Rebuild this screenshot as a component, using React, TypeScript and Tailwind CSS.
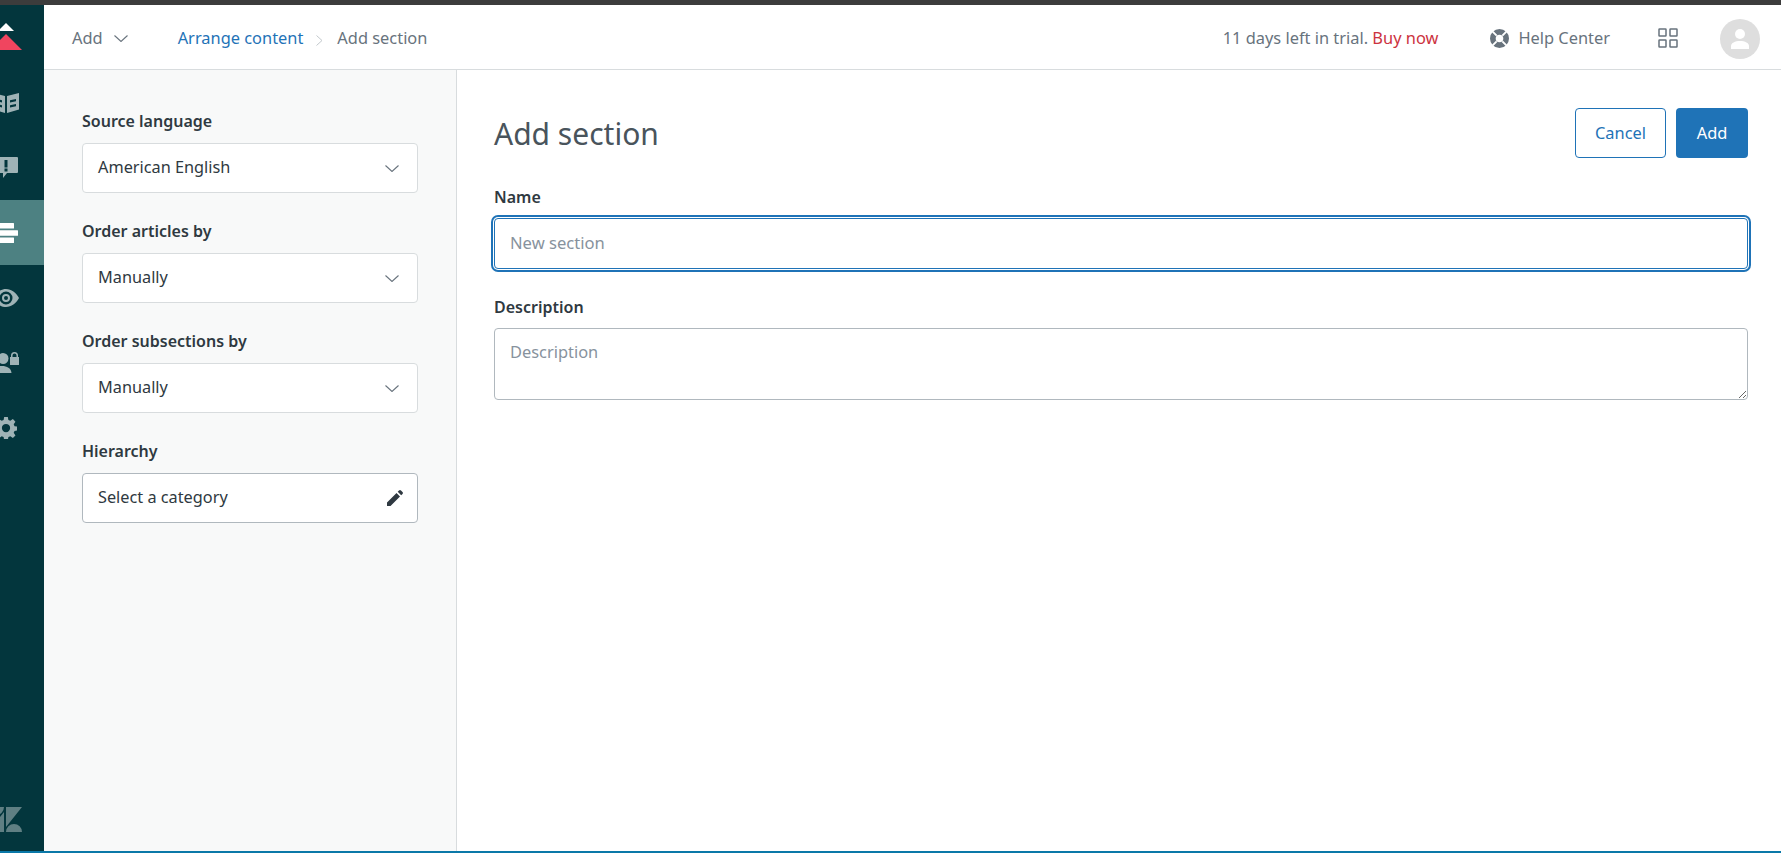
const navIcons = [
  // book
  <svg key="book" viewBox="0 0 26 20" className="w-[26px] h-[20px]" fill="#9fb3b6">
    <path d="M0 0l12 3v17l-12 -3.500zM3 6v2.200l6 1.300v-2.200zM3 11v2.200l6 1.300v-2.200zM14 3l12 -3v16.500l-12 3.500zM17 7.300v2.200l6 -1.300v-2.200zM17 12.300v2.200l6 -1.300v-2.200z" fillRule="evenodd" />
  </svg>,
  // alert bubble
  <svg key="alert" viewBox="0 0 24 21" className="w-[24px] h-[21px]" fill="#9fb3b6">
    <path d="M1 0h22a1 1 0 0 1 1 1v14a1 1 0 0 1 -1 1h-10l-4 5v-5h-8a1 1 0 0 1 -1 -1v-14a1 1 0 0 1 1 -1zM10.500 3v7.500h3v-7.500zM10.500 11.500v3h3v-3z" fillRule="evenodd" />
  </svg>,
  // arrange bars
  <svg key="bars" viewBox="0 0 24 20" className="w-[24px] h-[20px]" fill="#ffffff">
    <rect x="0" y="0" width="20" height="5.500" rx="0.500" />
    <rect x="0" y="7.300" width="24" height="5.500" rx="0.500" />
    <rect x="0" y="14.500" width="20" height="5.500" rx="0.500" />
  </svg>,
  // eye
  <svg key="eye" viewBox="0 0 26 18" className="w-[26px] h-[18px]" fill="#9fb3b6">
    <path d="M13 0c5.500 0 10 3.500 13 9c-3 5.500 -7.500 9 -13 9s-10 -3.500 -13 -9c3 -5.500 7.500 -9 13 -9zM13 2.500a6.500 6.500 0 1 0 0 13a6.500 6.500 0 0 0 0 -13zM13 5a4 4 0 1 1 0 8a4 4 0 0 1 0 -8zM13 7a2 2 0 1 0 0 4a2 2 0 0 0 0 -4z" fillRule="evenodd" />
  </svg>,
  // user + lock
  <svg key="lock" viewBox="0 0 28 21" className="w-[28px] h-[21px]" fill="#9fb3b6">
    <circle cx="11" cy="6.500" r="5.500" />
    <path d="M0 21v-2c0 -3 5 -5 10 -5s9 2 9.500 7z" />
    <path d="M19 5v-1.500a3.500 3.500 0 0 1 7 0v1.500h1v7.500a.5.5 0 0 1 -.5 .5h-8a.5.5 0 0 1 -.5 -.5v-7.500zM20.500 5h4v-1.500a2 2 0 0 0 -4 0z" fillRule="evenodd" />
  </svg>,
  // gear
  <svg key="gear" viewBox="0 0 24 24" className="w-[22px] h-[22px]" fill="#9fb3b6">
    <path d="M10 0h4l.6 3.300 2.100.9 2.800-1.900 2.800 2.800-1.900 2.800.9 2.100 3.300.6v4l-3.300.6-.9 2.100 1.900 2.800-2.800 2.800-2.800-1.900-2.100.9-.6 3.300h-4l-.6-3.300-2.100-.9-2.800 1.900-2.800-2.800 1.900-2.800-.9-2.100-3.300-.6v-4l3.300-.6.9-2.100-1.900-2.800 2.800-2.800 2.800 1.900 2.100-.9zM12 7.500a4.500 4.500 0 1 0 0 9a4.500 4.500 0 0 0 0 -9z" fillRule="evenodd" />
  </svg>,
];

function Chevron({ className = '' }: { className?: string }) {
  return (
    <svg viewBox="0 0 14 7" className={`w-[14px] h-[7px] shrink-0 ${className}`} fill="none" stroke="#68737d" strokeWidth="1.100">
      <path d="M.5 .5l6.500 6 6.500 -6" />
    </svg>
  );
}

function Sidebar() {
  return (
    <aside className="w-11 shrink-0 bg-[#03363d] overflow-hidden flex flex-col">
      <div className="-ml-4 w-[60px]">
        {/* logo */}
        <div className="h-[65px] flex flex-col items-center pt-[18px] pr-[16px]">
          <div className="w-0 h-0 border-l-[8px] border-r-[8px] border-b-[8px] border-l-transparent border-r-transparent border-b-white" />
          <div className="mt-[3px] w-0 h-0 border-l-[16px] border-r-[16px] border-b-[16px] border-l-transparent border-r-transparent border-b-[#f0455f]" />
        </div>
        {navIcons.map((icon, i) => (
          <div key={i} className={`h-[65px] flex items-center justify-center pr-[16px] ${i === 2 ? 'bg-[#4d8182]' : ''}`}>
            {icon}
          </div>
        ))}
      </div>
      <div className="mt-auto mb-[19px] -ml-[12px]">
        <svg viewBox="0 0 34 25" className="w-[34px] h-[25px]" fill="#5f7f83">
          <path d="M16 5v20h-16zM0 0h16a8 8 0 0 1 -16 0zM18 25a8 8 0 0 1 16 0zM18 20v-20h16z" />
        </svg>
      </div>
    </aside>
  );
}

function Header() {
  return (
    <header className="h-[65px] shrink-0 bg-white border-b border-[#d8dcde] flex items-center pt-[3px] text-[16.4px] text-[#68737d]">
      <div className="flex items-center ml-[28px]">
        <span>Add</span>
        <Chevron className="ml-[11px]" />
      </div>
      <a className="ml-[50px] text-[#1f73b7]">Arrange content</a>
      <svg viewBox="0 0 7 11" className="w-[7px] h-[11px] ml-[13px] mr-[14px] mt-[3px]" fill="none" stroke="#c2c8cc" strokeWidth="1">
        <path d="M.5 .5l5.500 5 -5.500 5" />
      </svg>
      <span>Add section</span>
      <div className="ml-auto flex items-center">
        <span>11 days left in trial. <span className="text-[#cc3340]">Buy now</span></span>
        <svg viewBox="0 0 20 20" className="w-[19px] h-[19px] ml-[52px]" fill="none">
          <circle cx="10" cy="10" r="7" stroke="#68737d" strokeWidth="6" />
          <path d="M2 2l5 5M18 2l-5 5M2 18l5 -5M18 18l-5 -5" stroke="#ffffff" strokeWidth="2" />
        </svg>
        <span className="ml-[9px]">Help Center</span>
        <svg viewBox="0 0 20 20" className="w-[20px] h-[20px] ml-[48px] mb-[2px]" fill="none" stroke="#68737d" strokeWidth="1.500">
          <rect x="1" y="1" width="7" height="7" rx="0.500" />
          <rect x="12" y="1" width="7" height="7" rx="0.500" />
          <rect x="1" y="12" width="7" height="7" rx="0.500" />
          <rect x="12" y="12" width="7" height="7" rx="0.500" />
        </svg>
        <div className="w-10 h-10 rounded-full bg-[#dedede] ml-[42px] mr-[21px] flex items-center justify-center">
          <svg viewBox="0 0 18 20" className="w-[18px] h-[20px]" fill="#ffffff">
            <circle cx="9" cy="5" r="5" />
            <path d="M0 20v-3c0 -3 4 -5 9 -5s9 2 9 5v3z" />
          </svg>
        </div>
      </div>
    </header>
  );
}

function Field({ label, value, pencil }: { label: string; value: string; pencil?: boolean }) {
  return (
    <div className="mb-[29px]">
      <div className="text-[16px] leading-[20px] font-semibold text-[#2f3941] mb-[11px] -mt-[1px] pb-[1px]">{label}</div>
      <div className={`h-[50px] bg-white rounded-[4px] border flex items-center justify-between pl-[15px] text-[16.3px] text-[#2f3941] ${pencil ? 'border-[#b0b8be] pr-[14px]' : 'border-[#d8dcde] pr-[18px]'}`}>
        <span className="-mt-[1px]">{value}</span>
        {pencil ? (
          <svg viewBox="0 0 16 16" className="w-[16px] h-[16px]" fill="#2f3941">
            <path d="M0 16v-3.500l9.500 -9.500 3.500 3.500 -9.500 9.500zM10.700 1.800l1.300 -1.300a1.500 1.500 0 0 1 2 0l1.500 1.500a1.500 1.500 0 0 1 0 2l-1.300 1.300z" />
          </svg>
        ) : (
          <Chevron />
        )}
      </div>
    </div>
  );
}

export default function App() {
  return (
    <div className="h-[853px] flex flex-col overflow-hidden bg-white font-['Noto_Sans','Open_Sans',sans-serif]">
      <div className="h-[5px] shrink-0 bg-[#3c3c3c]" />
      <div className="flex flex-1 min-h-0">
        <Sidebar />
        <div className="flex-1 flex flex-col min-w-0">
          <Header />
          <div className="flex flex-1 min-h-0">
            <div className="w-[413px] shrink-0 bg-[#f8f9f9] border-r border-[#d8dcde] pl-[38px] pr-[38px] pt-[42px]">
              <Field label="Source language" value="American English" />
              <Field label="Order articles by" value="Manually" />
              <Field label="Order subsections by" value="Manually" />
              <Field label="Hierarchy" value="Select a category" pencil />
            </div>
            <main className="flex-1 min-w-0 pl-[37px] pr-[33px] pt-[38px]">
              <div className="flex items-center justify-between h-[50px]">
                <h1 className="text-[30px] leading-[40px] pt-[1px] text-[#49545c] font-normal">Add section</h1>
                <div className="flex gap-[10px]">
                  <button className="w-[91px] h-[50px] rounded-[4px] border border-[#1f73b7] bg-white text-[#1f73b7] text-[16.4px]">Cancel</button>
                  <button className="w-[72px] h-[50px] rounded-[4px] bg-[#1f73b7] text-white text-[16.4px]">Add</button>
                </div>
              </div>
              <label className="block mt-[29px] text-[16px] leading-[20px] font-semibold text-[#2f3941] mb-[11px]">Name</label>
              <input
                placeholder="New section"
                className="block w-full h-[51px] rounded-[4px] border border-[#1f73b7] bg-white pl-[15px] pb-[2px] text-[16.6px] placeholder:text-[#87929d] outline-none shadow-[0_0_0_1px_#ffffff,0_0_0_3px_#1f73b7]"
              />
              <label className="block mt-[28px] text-[16px] leading-[20px] font-semibold text-[#2f3941] mb-[11px]">Description</label>
              <textarea
                placeholder="Description"
                className="block w-full h-[72px] rounded-[4px] border border-[#b0b8be] bg-white pl-[15px] pt-[11px] text-[16.4px] leading-[24px] placeholder:text-[#87929d] outline-none"
              />
            </main>
          </div>
        </div>
      </div>
      <div className="h-[2px] shrink-0 bg-[#0a78a8]" />
    </div>
  );
}
